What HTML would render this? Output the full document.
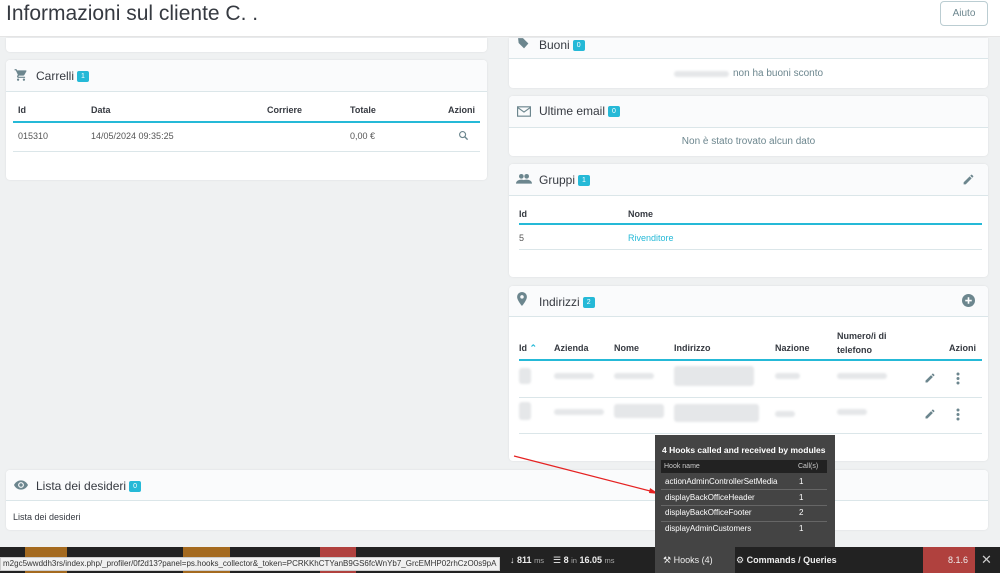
<!DOCTYPE html>
<html><head><meta charset="utf-8"><style>
*{box-sizing:border-box;margin:0;padding:0}
body{width:1000px;height:573px;overflow:hidden;background:#eff1f2;font-family:"Liberation Sans",sans-serif;color:#363a41;position:relative;font-size:9px}
.a{position:absolute}
.panel{position:absolute;background:#fff;border-radius:4px;box-shadow:0 0 2px rgba(0,0,0,.08)}
.ph{position:absolute;left:0;right:0;top:0;background:#fafbfc;border-bottom:1px solid #dbe6e9;border-radius:4px 4px 0 0;font-size:12px;color:#363a41}
.ph .t{position:absolute;left:30px}
.badge{display:inline-block;background:#25b9d7;color:#fff;font-size:7px;padding:2px 4px;border-radius:2px;vertical-align:middle;margin-left:3px}
.th{font-weight:bold;font-size:9px;color:#363a41}
.line{position:absolute;height:2px;background:#25b9d7}
.hr{position:absolute;height:1px;background:#dbe6e9}
.blur{position:absolute;background:#e5e7e9;height:6px;border-radius:3px;filter:blur(1px)}
.bar{position:absolute;left:0;right:0;top:547px;height:26px;background:#222;color:#eee;font-size:9px}
.bar span{position:absolute;top:8px}
</style></head><body>
<div class="a" style="left:0;top:0;width:1000px;height:37px;background:#fff;border-bottom:1px solid #e5e5e5"></div>
<div class="a" style="left:6px;top:2px;font-size:21px;color:#363a41">Informazioni sul cliente C. .</div>
<div class="a" style="left:940px;top:1px;width:48px;height:25px;border:1px solid #bbcdd2;border-radius:4px;font-size:10px;color:#6c868e;text-align:center;line-height:23px">Aiuto</div>

<div class="panel" style="left:6px;top:38px;width:481px;height:14px;border-radius:0 0 4px 4px"></div>

<div class="panel" style="left:6px;top:60px;width:481px;height:120px">
 <div class="ph" style="height:32px"><svg class="a" style="left:8px;top:8px" width="14" height="14" viewBox="0 0 24 24"><path fill="#6c868e" d="M7 18a2 2 0 1 0 0 4 2 2 0 0 0 0-4zM1 2v2h2l3.6 7.6-1.4 2.4C5 15 5.7 17 7 17h12v-2H7.4l1.1-2h7.5c.8 0 1.4-.4 1.7-1l3.6-6.5A1 1 0 0 0 20.4 4H5.2l-.9-2H1zm16 16a2 2 0 1 0 0 4 2 2 0 0 0 0-4z"/></svg><span class="t" style="top:9px">Carrelli<span class="badge">1</span></span></div>
 <span class="a th" style="left:12px;top:45px">Id</span><span class="a th" style="left:85px;top:45px">Data</span><span class="a th" style="left:261px;top:45px">Corriere</span><span class="a th" style="left:344px;top:45px">Totale</span><span class="a th" style="left:442px;top:45px">Azioni</span>
 <div class="line" style="left:7px;width:467px;top:61px"></div>
 <span class="a" style="left:12px;top:71px;color:#555">015310</span><span class="a" style="left:85px;top:71px;color:#555">14/05/2024 09:35:25</span><span class="a" style="left:344px;top:71px;color:#555">0,00 €</span>
 <svg class="a" style="left:452px;top:70px" width="11" height="11" viewBox="0 0 24 24"><circle cx="10" cy="10" r="6.5" fill="none" stroke="#6c868e" stroke-width="2.5"/><path d="M15 15l6 6" stroke="#6c868e" stroke-width="3"/></svg>
 <div class="hr" style="left:7px;width:467px;top:91px"></div>
</div>

<div class="panel" style="left:509px;top:38px;width:479px;height:50px;border-radius:0 0 4px 4px">
 <div class="ph" style="height:21px;border-radius:0"><svg class="a" style="left:8px;top:0px" width="13" height="11" viewBox="0 0 24 20"><path fill="#6c868e" d="M2 0h9l10 10-8 9L3 9z"/></svg><span class="t" style="top:0px">Buoni<span class="badge">0</span></span></div>
 <div class="blur" style="left:165px;top:33px;width:55px"></div>
 <span class="a" style="left:224px;top:30px;color:#6c868e;font-size:10px">non ha buoni sconto</span>
</div>

<div class="panel" style="left:509px;top:96px;width:479px;height:60px">
 <div class="ph" style="height:32px"><svg class="a" style="left:8px;top:10px" width="14" height="11" viewBox="0 0 24 18"><rect x="1" y="1" width="22" height="16" fill="none" stroke="#6c868e" stroke-width="2"/><path d="M1 2l11 8 11-8" fill="none" stroke="#6c868e" stroke-width="2"/></svg><span class="t" style="top:8px">Ultime email<span class="badge">0</span></span></div>
 <span class="a" style="left:0;width:479px;text-align:center;top:40px;color:#6c868e;font-size:10px">Non è stato trovato alcun dato</span>
</div>

<div class="panel" style="left:509px;top:164px;width:479px;height:113px">
 <div class="ph" style="height:32px"><svg class="a" style="left:7px;top:9px" width="16" height="12" viewBox="0 0 24 16"><circle cx="8" cy="4" r="3.5" fill="#6c868e"/><circle cx="16" cy="4" r="3.5" fill="#6c868e"/><path d="M0 15c0-4 4-6 8-6s8 2 8 6zM12 15c0-2 0-4-1-5 2-1 4-1 5-1 4 0 8 2 8 6z" fill="#6c868e"/></svg><span class="t" style="top:9px">Gruppi<span class="badge">1</span></span>
 <svg class="a" style="left:453px;top:9px" width="13" height="13" viewBox="0 0 24 24"><path fill="#6c868e" d="M3 17.2V21h3.8L17.8 9.9l-3.7-3.7zM20.7 7a1 1 0 0 0 0-1.4l-2.3-2.3a1 1 0 0 0-1.4 0l-1.8 1.8 3.7 3.7z"/></svg></div>
 <span class="a th" style="left:10px;top:45px">Id</span><span class="a th" style="left:119px;top:45px">Nome</span>
 <div class="line" style="left:10px;width:463px;top:59px"></div>
 <span class="a" style="left:10px;top:69px;color:#555">5</span><span class="a" style="left:119px;top:69px;color:#25b9d7">Rivenditore</span>
 <div class="hr" style="left:10px;width:463px;top:85px"></div>
</div>

<div class="panel" style="left:509px;top:286px;width:479px;height:175px">
 <div class="ph" style="height:31px"><svg class="a" style="left:8px;top:6px" width="10" height="14" viewBox="0 0 14 20"><path fill="#6c868e" d="M7 0a7 7 0 0 0-7 7c0 5 7 13 7 13s7-8 7-13a7 7 0 0 0-7-7zm0 9.5A2.5 2.5 0 1 1 7 4.5a2.5 2.5 0 0 1 0 5z"/></svg><span class="t" style="top:9px">Indirizzi<span class="badge">2</span></span>
 <svg class="a" style="left:453px;top:8px" width="13" height="13" viewBox="0 0 24 24"><circle cx="12" cy="12" r="12" fill="#6c868e"/><path d="M12 6v12M6 12h12" stroke="#fff" stroke-width="3"/></svg></div>
 <span class="a th" style="left:10px;top:57px">Id <span style="color:#25b9d7">⌃</span></span><span class="a th" style="left:45px;top:57px">Azienda</span><span class="a th" style="left:105px;top:57px">Nome</span><span class="a th" style="left:165px;top:57px">Indirizzo</span><span class="a th" style="left:266px;top:57px">Nazione</span><span class="a th" style="left:328px;top:43px;line-height:14px">Numero/i di<br>telefono</span><span class="a th" style="left:440px;top:57px">Azioni</span>
 <div class="line" style="left:10px;width:463px;top:73px"></div>
 <div class="blur" style="left:10px;top:82px;width:12px;height:16px"></div><div class="blur" style="left:45px;top:87px;width:40px"></div><div class="blur" style="left:105px;top:87px;width:40px"></div><div class="blur" style="left:165px;top:80px;width:80px;height:20px"></div><div class="blur" style="left:266px;top:87px;width:25px"></div><div class="blur" style="left:328px;top:87px;width:50px"></div>
 <div class="hr" style="left:10px;width:463px;top:111px"></div>
 <div class="blur" style="left:10px;top:116px;width:12px;height:18px"></div><div class="blur" style="left:45px;top:123px;width:50px"></div><div class="blur" style="left:105px;top:118px;width:50px;height:14px"></div><div class="blur" style="left:165px;top:118px;width:85px;height:18px"></div><div class="blur" style="left:266px;top:125px;width:20px"></div><div class="blur" style="left:328px;top:123px;width:30px"></div>
 <div class="hr" style="left:10px;width:463px;top:147px"></div>
 <svg class="a" style="left:415px;top:86px" width="12" height="12" viewBox="0 0 24 24"><path fill="#6c868e" d="M3 17.2V21h3.8L17.8 9.9l-3.7-3.7zM20.7 7a1 1 0 0 0 0-1.4l-2.3-2.3a1 1 0 0 0-1.4 0l-1.8 1.8 3.7 3.7z"/></svg>
 <svg class="a" style="left:415px;top:122px" width="12" height="12" viewBox="0 0 24 24"><path fill="#6c868e" d="M3 17.2V21h3.8L17.8 9.9l-3.7-3.7zM20.7 7a1 1 0 0 0 0-1.4l-2.3-2.3a1 1 0 0 0-1.4 0l-1.8 1.8 3.7 3.7z"/></svg>
 <svg class="a" style="left:447px;top:86px" width="4" height="13" viewBox="0 0 4 13"><circle cx="2" cy="2" r="1.5" fill="#6c868e"/><circle cx="2" cy="6.5" r="1.5" fill="#6c868e"/><circle cx="2" cy="11" r="1.5" fill="#6c868e"/></svg>
 <svg class="a" style="left:447px;top:122px" width="4" height="13" viewBox="0 0 4 13"><circle cx="2" cy="2" r="1.5" fill="#6c868e"/><circle cx="2" cy="6.5" r="1.5" fill="#6c868e"/><circle cx="2" cy="11" r="1.5" fill="#6c868e"/></svg>
</div>

<div class="panel" style="left:6px;top:470px;width:982px;height:60px">
 <div class="ph" style="height:31px"><svg class="a" style="left:8px;top:10px" width="14" height="10" viewBox="0 0 24 16"><path fill="#6c868e" d="M12 0C6 0 2 4 0 8c2 4 6 8 12 8s10-4 12-8C22 4 18 0 12 0zm0 13a5 5 0 1 1 0-10 5 5 0 0 1 0 10zm0-8a3 3 0 1 0 0 6 3 3 0 0 0 0-6z"/></svg><span class="t" style="top:9px">Lista dei desideri<span class="badge">0</span></span></div>
 <span class="a" style="left:7px;top:42px;color:#363a41">Lista dei desideri</span>
</div>

<svg class="a" style="left:510px;top:452px" width="150" height="45"><path d="M4 4L144 40" stroke="#e52222" stroke-width="1.2"/><path d="M149 42l-9-6-1 5z" fill="#e52222"/></svg>

<div class="a" style="left:655px;top:435px;width:180px;height:112px;background:#444;color:#fff">
 <div class="a" style="left:7px;top:10px;font-size:8.5px;font-weight:bold">4 Hooks called and received by modules</div>
 <div class="a" style="left:6px;top:25px;width:166px;height:13px;background:#222;font-size:7px;color:#ccc"><span class="a" style="left:3px;top:3px">Hook name</span><span class="a" style="left:137px;top:3px">Call(s)</span></div>
 <div class="a" style="left:10px;top:39px;font-size:8px;line-height:15.7px">actionAdminControllerSetMedia<br>displayBackOfficeHeader<br>displayBackOfficeFooter<br>displayAdminCustomers</div>
 <div class="a" style="left:144px;top:39px;font-size:8px;line-height:15.7px">1<br>1<br>2<br>1</div>
 <div class="a" style="left:6px;top:54px;width:166px;height:1px;background:#666"></div><div class="a" style="left:6px;top:70px;width:166px;height:1px;background:#666"></div><div class="a" style="left:6px;top:86px;width:166px;height:1px;background:#666"></div>
</div>

<div class="bar">
 <div class="a" style="left:25px;top:0;width:42px;height:26px;background:#a46a1f"></div>
 <div class="a" style="left:183px;top:0;width:47px;height:26px;background:#a46a1f"></div>
 <div class="a" style="left:320px;top:0;width:36px;height:26px;background:#b0413e"></div>
 <span style="left:510px;">↓ <b>811</b> <small style="color:#aaa">ms</small></span>
 <span style="left:553px;">☰ <b>8</b> <small style="color:#aaa">in</small> <b>16.05</b> <small style="color:#aaa">ms</small></span>
 <div class="a" style="left:655px;top:0;width:80px;height:26px;background:#444"></div>
 <span style="left:663px">⚒ Hooks (4)</span>
 <span style="left:736px">⚙ <b>Commands / Queries</b></span>
 <div class="a" style="left:923px;top:0;width:52px;height:26px;background:#b0413e"></div>
 <span style="left:948px">8.1.6</span>
 <span style="left:981px;font-size:13px;top:5px;color:#ccc">✕</span>
</div>
<div class="a" style="left:0;top:557px;width:500px;height:14px;background:#f0f0f0;border:1px solid #ccc;font-size:8px;color:#333;line-height:12px;padding-left:2px;white-space:nowrap;overflow:hidden">m2gc5wwddh3rs/index.php/_profiler/0f2d13?panel=ps.hooks_collector&amp;_token=PCRKKhCTYanB9GS6fcWnYb7_GrcEMHP02rhCzO0s9pA</div>
</body></html>
